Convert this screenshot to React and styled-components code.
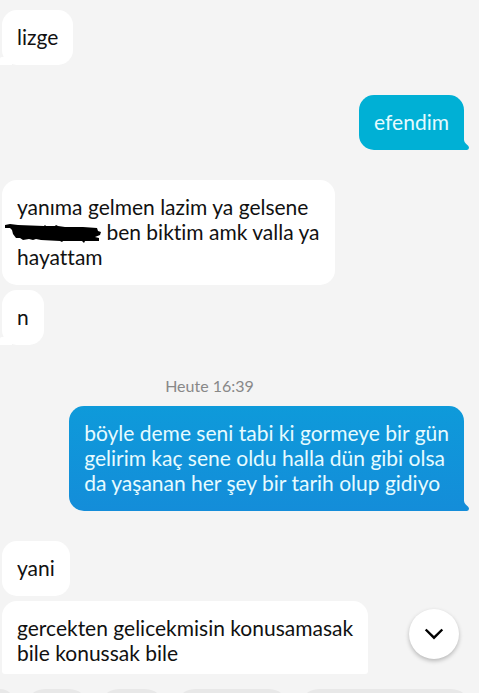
import React from 'react';
import styled, { createGlobalStyle } from 'styled-components';

const quickReplies = [
    { id: 1, width: 15 },
    { id: 2, width: 64 },
    { id: 3, width: 66 },
    { id: 4, width: 114 },
    { id: 5, width: 172 },
];

function Tail({ color }) {
    return (
        <TailShape viewBox="0 0 8 10" aria-hidden="true">
            <path d="M0 0H3Q3.200 2.200 5 3.800Q8 6.200 8 7.600Q8 10 6 10H0Z" fill={color} />
        </TailShape>
    );
}

function Received({ children, gap, linked, cut }) {
    return (
        <Row $gap={gap}>
            <ReceivedBubble $linked={linked} $cut={cut}>{children}</ReceivedBubble>
        </Row>
    );
}

function Sent({ children, gap, from, to }) {
    return (
        <Row $gap={gap} $sent>
            <SentBubble $from={from} $to={to}>
                {children}
                <Tail color={to} />
            </SentBubble>
        </Row>
    );
}

export default function App() {
    return (
        <>
            <GlobalStyle />
            <Screen>
                <Messages>
                    <Received gap={10} linked>lizge</Received>
                    <Sent gap={30} from="#00b0d5" to="#00b0d5">efendim</Sent>
                    <Received gap={30}>
                        yanıma gelmen lazim ya gelsene<br />
                        <Hidden>
                            <Scribble viewBox="0 0 98 22" aria-hidden="true">
                                <path d="M0 2L5 1L13 2L39 3L40 2L41 3L50 3L51 2L53 3L60 4L78 4L92 5L93 8L96 9L95 12L90 14L94 15L94 18L80 18L79 20L77 18L58 18L57 19L55 18L36 17L31 16L28 17L24 16L18 17L15 15L11 15L8 11L7 7L5 5L0 5Z" />
                            </Scribble>
                        </Hidden>{' '}
                        ben biktim amk valla ya<br />
                        hayattam
                    </Received>
                    <Received gap={5} linked>n</Received>
                    <Time>Heute 16:39</Time>
                    <Sent from="#0e9ada" to="#148dd9">
                        böyle deme seni tabi ki gormeye bir gün<br />
                        gelirim kaç sene oldu halla dün gibi olsa<br />
                        da yaşanan her şey bir tarih olup gidiyo
                    </Sent>
                    <Received gap={30}>yani</Received>
                    <Received gap={5} cut>
                        gercekten gelicekmisin konusamasak<br />
                        bile konussak bile
                    </Received>
                    <ScrollDown type="button" aria-label="Nach unten">
                        <svg width="20" height="14" viewBox="0 0 20 14" aria-hidden="true">
                            <path d="M1.700 2.500L10 10.700L18.300 2.500" fill="none" stroke="#000" strokeWidth="2.400" />
                        </svg>
                    </ScrollDown>
                </Messages>
                <Replies>
                    {quickReplies.map(reply => (
                        <Reply key={reply.id} $width={reply.width} />
                    ))}
                </Replies>
            </Screen>
        </>
    );
}

const GlobalStyle = createGlobalStyle`
    * {
        box-sizing: border-box;
    }
    body {
        margin: 0;
        background: #f4f4f4;
        font-family: Lato, "Liberation Sans", sans-serif;
        font-variant-ligatures: none;
    }
`;

const Screen = styled.main`
    display: flex;
    flex-direction: column;
    height: 100vh;
    overflow: hidden;
`;

const Messages = styled.section`
    position: relative;
    flex: 1;
    min-height: 0;
    overflow: hidden;
`;

const Row = styled.div`
    display: flex;
    justify-content: ${props => props.$sent ? 'flex-end' : 'flex-start'};
    padding: 0 15px 0 2px;
    margin-top: ${props => props.$gap || 0}px;
`;

const Bubble = styled.div`
    position: relative;
    padding: 14px 15px 16px;
    border-radius: 15px;
    font-size: 21px;
    line-height: 25px;
    white-space: nowrap;
`;

const ReceivedBubble = styled(Bubble)`
    background: #fff;
    color: #111;
    ${props => props.$cut && 'padding-bottom: 9px; border-radius: 15px 15px 3px 3px;'}
    ${props => props.$linked && `
        &::before {
            content: '';
            position: absolute;
            left: -2px;
            bottom: 0;
            width: 12px;
            height: 8px;
            border-radius: 2px 0 0 0;
            background: #fff;
        }
    `}
`;

const SentBubble = styled(Bubble)`
    border-radius: 15px 15px 0 15px;
    background: linear-gradient(${props => props.$from}, ${props => props.$to});
    color: #e6fbff;
`;

const TailShape = styled.svg`
    position: absolute;
    right: -5px;
    bottom: 0;
    width: 8px;
    height: 10px;
`;

const Hidden = styled.span`
    position: relative;
    display: inline-block;
    width: 84px;
    height: 15px;
`;

const Scribble = styled.svg`
    position: absolute;
    left: -12px;
    top: -2px;
    width: 98px;
    height: 22px;
`;

const Time = styled.p`
    margin: 31px 60px 10px 0;
    color: #888;
    font-size: 16px;
    line-height: 20px;
    text-align: center;
`;

const ScrollDown = styled.button`
    position: absolute;
    right: 20px;
    bottom: 15px;
    display: grid;
    place-content: center;
    width: 50px;
    height: 50px;
    padding: 0;
    border: 0;
    border-radius: 50%;
    background: #fff;
    box-shadow: 0 2px 4px rgba(0, 0, 0, .25);
    cursor: pointer;
`;

const Replies = styled.div`
    display: flex;
    gap: 10px;
    height: 19px;
    padding-top: 15px;
    overflow: hidden;
`;

const Reply = styled.div`
    flex: none;
    width: ${props => props.$width}px;
    height: 40px;
    border-radius: 20px;
    background: #e8e8e8;

    &:first-child {
        border-radius: 0 20px 20px 0;
    }
`;
